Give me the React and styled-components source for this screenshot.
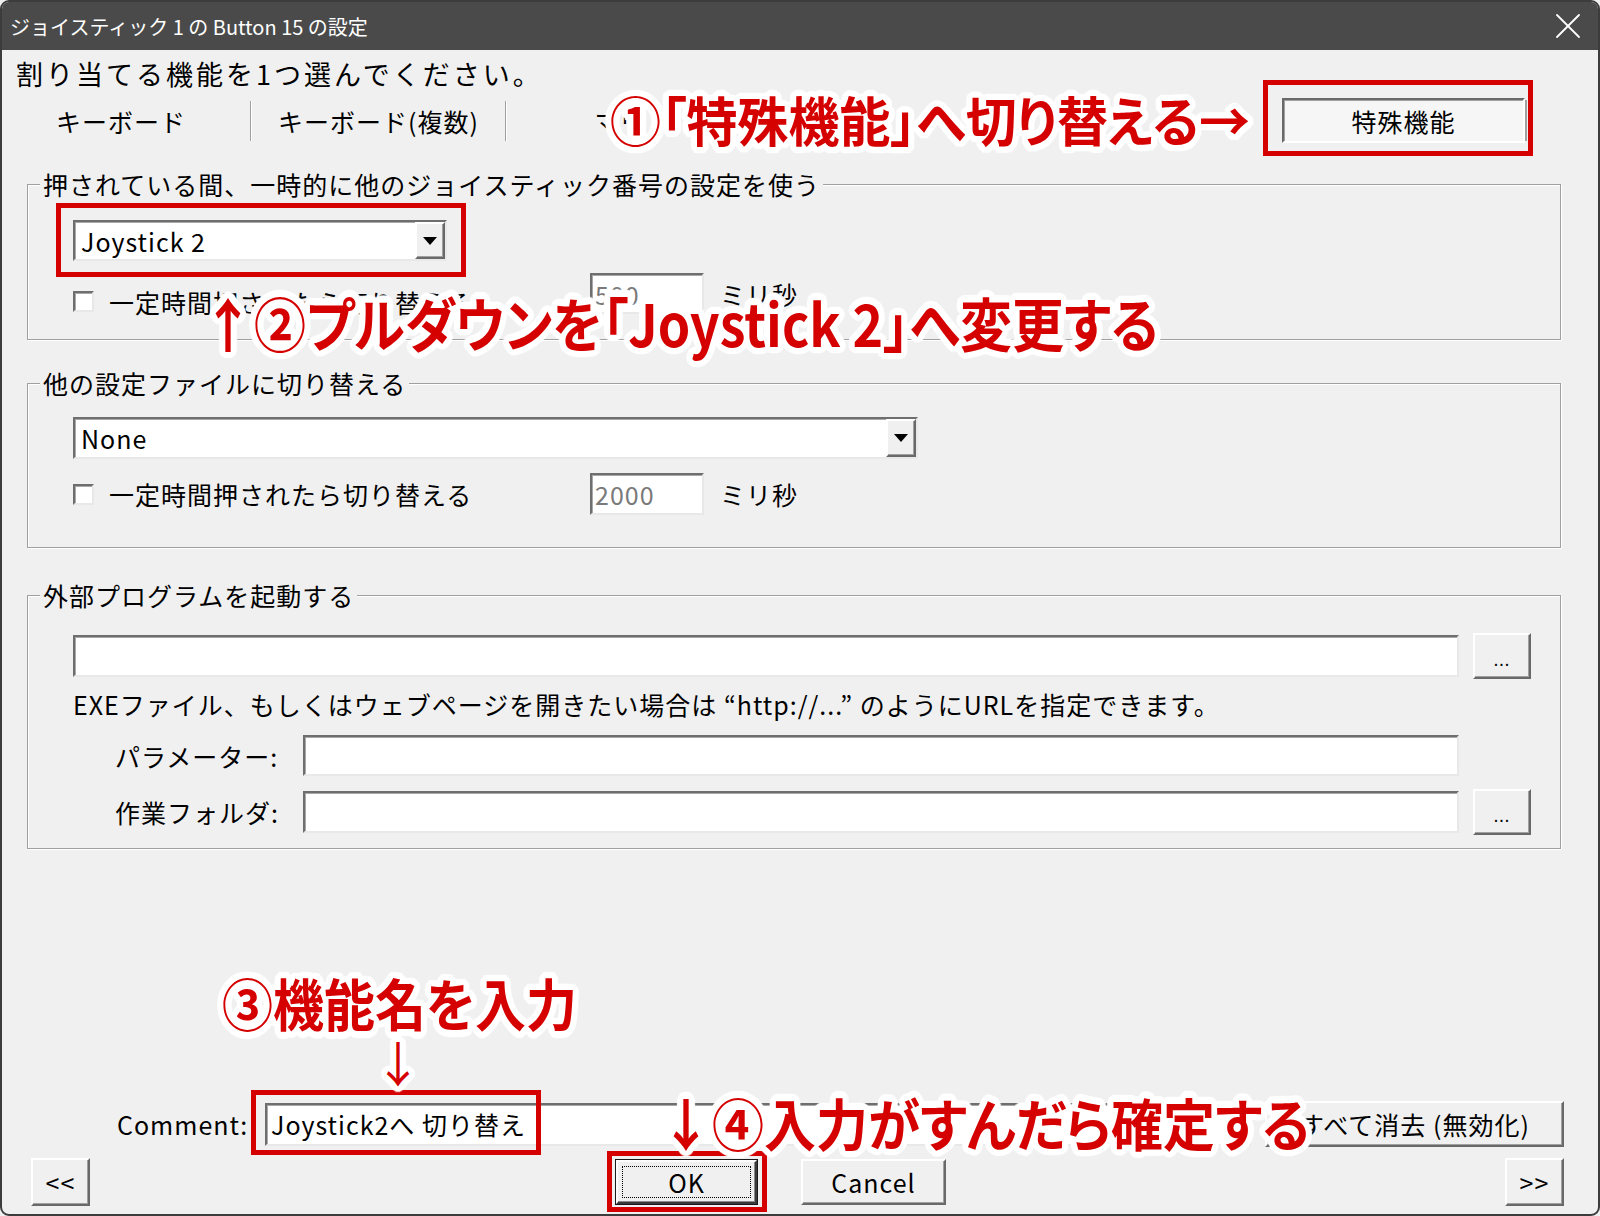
import React from 'react'
import styled, { createGlobalStyle, css } from 'styled-components'
import { X } from 'lucide-react'

const GlobalStyle = createGlobalStyle`
  html, body {
    margin: 0;
    padding: 0;
    background: #f0f0f0;
  }
  body {
    font-family: "Noto Sans CJK JP", "Noto Sans", sans-serif;
  }
`

const raised = css`
  box-sizing: border-box;
  border: 2px solid;
  border-color: #ffffff #696969 #696969 #ffffff;
  box-shadow: inset -1px -1px 0 #a0a0a0;
  background: #f0f0f0;
`

const sunken = css`
  box-sizing: border-box;
  border: 2px solid;
  border-color: #6e6e6e #e8e8e8 #e8e8e8 #6e6e6e;
  box-shadow: inset 1px 1px 0 #a8a8a8;
  background: #ffffff;
`

const RED = '#d50000'

const halo = (r) =>
  Array.from({ length: 24 }, (_, i) => {
    const a = (i / 24) * Math.PI * 2
    return `${(Math.cos(a) * r).toFixed(1)}px ${(Math.sin(a) * r).toFixed(1)}px 1px #fff`
  }).join(', ')

const Window = styled.div`
  position: relative;
  width: 1600px;
  height: 1216px;
  box-sizing: border-box;
  border: 2px solid #3c3c3c;
  border-radius: 9px;
  overflow: hidden;
  background: #f0f0f0;
  display: flex;
  flex-direction: column;
  font-family: "Noto Sans CJK JP", "Noto Sans", sans-serif;
  color: #000;
`

const TitleBar = styled.div`
  height: 48px;
  flex: none;
  background: #4a4a4a;
  color: #fff;
  display: flex;
  align-items: center;
  justify-content: space-between;
  padding: 0 8px 0 8px;
  font-size: 20px;
`

const Body = styled.div`
  flex: 1;
  display: flex;
  flex-direction: column;
  padding: 0 34px 8px 14px;
  font-size: 25px;
  letter-spacing: 1px;
  line-height: 28px;
`

const Heading = styled.div`
  margin-top: 8px;
  font-size: 27px;
  letter-spacing: 3px;
  line-height: 32px;
`

const TabRow = styled.div`
  display: flex;
  align-items: center;
  height: 45px;
  margin: 8px 0 0 -24px;
`

const Tab = styled.div`
  flex: none;
  width: ${(p) => p.$w}px;
  text-align: center;
`

const TabSep = styled.div`
  flex: none;
  width: 0;
  height: 40px;
  border-left: 1px solid #a0a0a0;
  border-right: 1px solid #fff;
`

const ModeButton = styled.div`
  box-sizing: border-box;
  margin: 0 39px 0 auto;
  width: 243px;
  height: 45px;
  border: 2px solid;
  border-color: #696969 #ffffff #ffffff #696969;
  box-shadow: inset 1px 1px 0 #a0a0a0, 4px 0 0 -2px #a0a0a0;
  background: #f6f6f6;
  display: flex;
  align-items: center;
  justify-content: center;
`

const Group = styled.div`
  margin: ${(p) => p.$mt}px 3px 0 11px;
  border: 1px solid #a0a0a0;
  box-shadow: inset 1px 1px 0 #fff, 1px 1px 0 #fff;
  display: flex;
  flex-direction: column;
  align-items: flex-start;
  padding: 0 29px ${(p) => p.$pb}px 45px;
`

const GroupTitle = styled.div`
  margin: -15px 0 0 -33px;
  padding: 0 3px;
  background: #f0f0f0;
  line-height: 28px;
`

const Combo = styled.div`
  ${sunken};
  margin-top: ${(p) => p.$mt}px;
  width: ${(p) => p.$w}px;
  height: ${(p) => p.$h}px;
  display: flex;
  align-items: stretch;
`

const ComboText = styled.div`
  flex: 1;
  display: flex;
  align-items: center;
  padding-left: 6px;
`

const DropButton = styled.div`
  ${raised};
  width: 30px;
  display: flex;
  align-items: center;
  justify-content: center;
`

const Triangle = styled.div`
  width: 0;
  height: 0;
  border-left: 7px solid transparent;
  border-right: 7px solid transparent;
  border-top: 8px solid #000;
`

const OptionRow = styled.div`
  display: flex;
  align-items: center;
  width: 100%;
  margin-top: ${(p) => p.$mt}px;
  height: ${(p) => p.$h}px;
`

const CheckLabel = styled.div`
  display: flex;
  align-items: center;
  gap: 15px;
  width: 517px;
  flex: none;
  margin-top: ${(p) => (p.$drop || 0) * 2}px;
`

const Checkbox = styled.div`
  ${sunken};
  width: 21px;
  height: 21px;
  flex: none;
`

const NumberField = styled.div`
  ${sunken};
  width: 114px;
  height: 100%;
  padding-left: 3px;
  display: flex;
  align-items: center;
  color: #7a7a7a;
`

const Unit = styled.div`
  margin-left: 16px;
`

const FieldRow = styled.div`
  display: flex;
  align-items: center;
  width: 100%;
  margin-top: ${(p) => p.$mt}px;
  height: ${(p) => p.$h}px;
`

const FieldLabel = styled.div`
  flex: none;
  width: 230px;
  padding-left: 42px;
  box-sizing: border-box;
`

const TextField = styled.div`
  ${sunken};
  flex: 1;
  height: ${(p) => p.$h}px;
  display: flex;
  align-items: center;
  padding-left: 4px;
`

const BrowseButton = styled.div`
  ${raised};
  flex: none;
  margin-left: 14px;
  width: 58px;
  height: 46px;
  font-size: 16px;
  display: flex;
  align-items: flex-end;
  justify-content: center;
  padding-bottom: 10px;
  line-height: 16px;
`

const ButtonSlot = styled.div`
  flex: none;
  width: 72px;
`

const HelpText = styled.div`
  margin-top: 11px;
`

const Filler = styled.div`
  flex: 1;
`

const CommentRow = styled.div`
  display: flex;
  align-items: center;
  height: 48px;
`

const CommentLabel = styled.div`
  flex: none;
  width: 148px;
  margin-left: 101px;
`

const PushButton = styled.div`
  ${raised};
  flex: none;
  margin-left: ${(p) => p.$ml || 0};
  width: ${(p) => p.$w}px;
  height: ${(p) => p.$h}px;
  display: flex;
  align-items: center;
  justify-content: center;
`

const DefaultButton = styled.div`
  ${raised};
  flex: none;
  margin-left: 526px;
  width: 141px;
  height: 44px;
  border-color: #ffffff #3a3a3a #3a3a3a #ffffff;
  box-shadow: 0 0 0 1px #1a1a1a, inset -1px -1px 0 #8a8a8a;
  padding: 4px;
  display: flex;
`

const FocusRing = styled.div`
  flex: 1;
  border: 1px dotted #000;
  display: flex;
  align-items: center;
  justify-content: center;
`

const ButtonRow = styled.div`
  display: flex;
  align-items: center;
  height: 48px;
  margin-top: 10px;
`

const RedBox = styled.div`
  position: absolute;
  left: ${(p) => p.$x}px;
  top: ${(p) => p.$y}px;
  width: ${(p) => p.$w}px;
  height: ${(p) => p.$h}px;
  box-sizing: border-box;
  border: 5px solid ${RED};
  pointer-events: none;
`

const Callout = styled.div`
  position: absolute;
  left: ${(p) => p.$x}px;
  top: ${(p) => p.$y}px;
  font-size: ${(p) => p.$size}px;
  font-weight: ${(p) => p.$weight || 700};
  font-feature-settings: "palt";
  line-height: 1;
  color: ${RED};
  white-space: nowrap;
  text-shadow: ${halo(6)}, ${halo(3)};
  transform: scaleY(${(p) => p.$sy || 1});
  transform-origin: left center;
  pointer-events: none;
`

export default function App() {
  return (
    <>
      <GlobalStyle />
      <Window>
        <TitleBar>
          <span>ジョイスティック 1 の Button 15 の設定</span>
          <X size={44} strokeWidth={1} color="#fff" />
        </TitleBar>
        <Body>
          <Heading>割り当てる機能を1つ選んでください。</Heading>
          <TabRow>
            <Tab $w={258}>キーボード</Tab>
            <TabSep />
            <Tab $w={253}>キーボード(複数)</Tab>
            <TabSep />
            <Tab $w={253}>マウス</Tab>
            <ModeButton>特殊機能</ModeButton>
          </TabRow>

          <Group $mt={41} $pb={25}>
            <GroupTitle>押されている間、一時的に他のジョイスティック番号の設定を使う</GroupTitle>
            <Combo $mt={22} $w={374} $h={41}>
              <ComboText>Joystick 2</ComboText>
              <DropButton>
                <Triangle />
              </DropButton>
            </Combo>
            <OptionRow $mt={12} $h={41}>
              <CheckLabel $drop={8}>
                <Checkbox />
                <span>一定時間押されたら切り替える</span>
              </CheckLabel>
              <NumberField>500</NumberField>
              <Unit>ミリ秒</Unit>
            </OptionRow>
          </Group>

          <Group $mt={43} $pb={32}>
            <GroupTitle>他の設定ファイルに切り替える</GroupTitle>
            <Combo $mt={20} $w={845} $h={42}>
              <ComboText>None</ComboText>
              <DropButton>
                <Triangle />
              </DropButton>
            </Combo>
            <OptionRow $mt={14} $h={42}>
              <CheckLabel>
                <Checkbox />
                <span>一定時間押されたら切り替える</span>
              </CheckLabel>
              <NumberField>2000</NumberField>
              <Unit>ミリ秒</Unit>
            </OptionRow>
          </Group>

          <Group $mt={47} $pb={13}>
            <GroupTitle>外部プログラムを起動する</GroupTitle>
            <FieldRow $mt={24} $h={46}>
              <TextField $h={42} />
              <BrowseButton>...</BrowseButton>
            </FieldRow>
            <HelpText>
              EXEファイル、もしくはウェブページを開きたい場合は “http://...” のようにURLを指定できます。
            </HelpText>
            <FieldRow $mt={17} $h={41}>
              <FieldLabel>パラメーター:</FieldLabel>
              <TextField $h={41} />
              <ButtonSlot />
            </FieldRow>
            <FieldRow $mt={12} $h={47}>
              <FieldLabel>作業フォルダ:</FieldLabel>
              <TextField $h={42} />
              <BrowseButton>...</BrowseButton>
            </FieldRow>
          </Group>

          <Filler />

          <CommentRow>
            <CommentLabel>Comment:</CommentLabel>
            <TextField $h={43}>Joystick2へ 切り替え</TextField>
            <PushButton $ml="14px" $w={299} $h={46}>
              すべて消去 (無効化)
            </PushButton>
          </CommentRow>
          <ButtonRow>
            <PushButton $ml="15px" $w={59} $h={48}>
              &lt;&lt;
            </PushButton>
            <DefaultButton>
              <FocusRing>OK</FocusRing>
            </DefaultButton>
            <PushButton $ml="44px" $w={145} $h={46}>
              Cancel
            </PushButton>
            <PushButton $ml="auto" $w={59} $h={48}>
              &gt;&gt;
            </PushButton>
          </ButtonRow>
        </Body>

        <RedBox $x={1261} $y={78} $w={270} $h={76} />
        <RedBox $x={54} $y={201} $w={410} $h={74} />
        <RedBox $x={249} $y={1088} $w={290} $h={65} />
        <RedBox $x={605} $y={1149} $w={160} $h={61} />

        <Callout $x={608} $y={92} $size={51} $sy={1.05}>
          ①「特殊機能」へ切り替える→
        </Callout>
        <Callout $x={200} $y={294} $size={52} $sy={1.12}>
          ↑②プルダウンを「Joystick 2」へ変更する
        </Callout>
        <Callout $x={220} $y={975} $size={51} $sy={1.1}>
          ③機能名を入力
        </Callout>
        <Callout $x={372} $y={1035} $size={48} $weight={400}>
          ↓
        </Callout>
        <Callout $x={658} $y={1094} $size={52} $sy={1.08}>
          ↓④入力がすんだら確定する
        </Callout>
      </Window>
    </>
  )
}
